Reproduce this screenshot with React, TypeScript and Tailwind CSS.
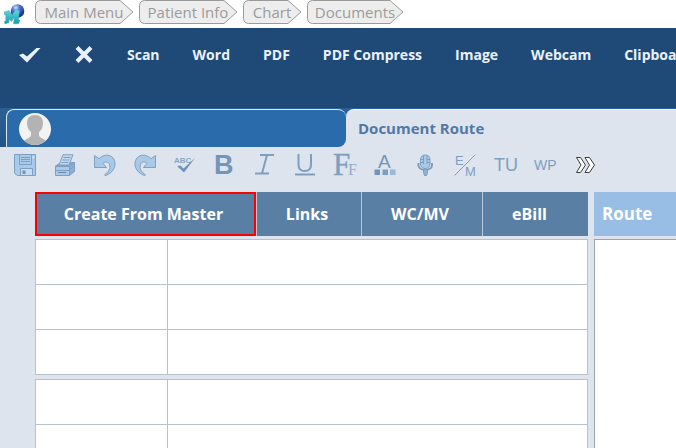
import type { ReactNode } from "react";

const crumbs = [
  { label: "Main Menu", width: 98 },
  { label: "Patient Info", width: 98 },
  { label: "Chart", width: 58 },
  { label: "Documents", width: 96 },
];

const actions = ["Scan", "Word", "PDF", "PDF Compress", "Image", "Webcam", "Clipboard"];

const STEEL = "#7f9fc0";
const SKY = "#a9c9e8";

function Crumb({ label, width }: { label: string; width: number }) {
  const r = width - 1;
  return (
    <a href="#" className="relative flex h-6 shrink-0 items-center justify-center" style={{ width }}>
      <svg className="absolute inset-0 overflow-visible" width={width} height="24" aria-hidden="true">
        <path
          d={`M5.5 .5H${r - 12}L${r + 1} 12L${r - 12} 23.5H5.5Q.5 23 .5 18.500V5.500Q.5 1 5.500 .5Z`}
          fill="#ededed"
          stroke="#9a9a9a"
        />
      </svg>
      <span className="relative text-[15px] leading-5 whitespace-nowrap text-[#9b9b9b]">{label}</span>
    </a>
  );
}

function Tool({ label, children }: { label: string; children: ReactNode }) {
  return (
    <button type="button" aria-label={label} className="size-[22px] shrink-0">
      <svg width="22" height="22" viewBox="0 0 22 22" fill="none" className="overflow-visible">
        {children}
      </svg>
    </button>
  );
}

function Toolbar() {
  const sans = "Liberation Sans, Arial, sans-serif";
  const serif = "Liberation Serif, Times New Roman, serif";
  return (
    <div className="flex gap-[18px] overflow-hidden pt-[7px] pb-4 pl-[14px]">
      <Tool label="Save">
        <path d="M.5 .5H21.500V21.500H3L.5 19Z" fill={SKY} stroke={STEEL} />
        <path d="M5.500 .5V10.500H17.500V.5M7 3.500H16M7 5.500H16M7 7.500H16" stroke={STEEL} />
        <path d="M6.500 21V14.500H18.500V21" fill="#c5dbf0" stroke={STEEL} />
        <path d="M8.500 16.500H11.500V20H8.500Z" fill="#6f92b8" />
        <path d="M18.500 2.500H20V4H18.500Z" fill="#e8f1fa" />
      </Tool>
      <Tool label="Print">
        <path d="M1.500 12L7 8.500H20.500L15.500 12Z" fill="#88a9ca" stroke={STEEL} />
        <path d="M5 11L9 .8H19L15 11Z" fill="#c0d9f0" stroke={STEEL} />
        <path d="M9.500 3.500H16.500M8.500 6H15.500M7.500 8.500H14.500" stroke={STEEL} />
        <path d="M1.500 12.500H15.500V21.500H1.500Z" fill={SKY} stroke={STEEL} />
        <path d="M15.500 12.500L20.500 8.500V17.500L15.500 21.500Z" fill="#8fb0d1" stroke={STEEL} />
        <path d="M2 16.500H15L20 12.500" stroke={STEEL} />
        <path d="M4 18.500H12" stroke="#6888aa" />
      </Tool>
      <Tool label="Undo">
        <path
          d="M.5 1.500L5 4.700C9 .5 15.500 -.2 19 4C23.500 9.500 20.500 18.500 11.500 21.500C10.500 21.700 10.500 20.500 11.500 20C16 17 17 12.500 15 9.500C13.500 7.400 11 7.500 9 9.300L12.500 13.500H.5Z"
          fill={SKY}
          stroke={STEEL}
        />
      </Tool>
      <Tool label="Redo">
        <path
          d="M21.500 1.500L17 4.700C13 .5 6.500 -.2 3 4C-1.500 9.500 1.500 18.500 10.500 21.500C11.500 21.700 11.500 20.500 10.500 20C6 17 5 12.500 7 9.500C8.500 7.400 11 7.500 13 9.300L9.500 13.500H21.500Z"
          fill={SKY}
          stroke={STEEL}
        />
      </Tool>
      <Tool label="Spell check">
        <text x="0" y="9" fontFamily={sans} fontSize="8" fontWeight="700" fill="#8aa6c3">ABC</text>
        <path d="M3 12L6.500 11.500L9.500 14.500L21 4L10 18.500Z" fill="#6f92b5" />
      </Tool>
      <Tool label="Bold">
        <text x="0" y="20" fontFamily={sans} fontSize="27" fontWeight="700" fill="#7395b9">B</text>
      </Tool>
      <Tool label="Italic">
        <path d="M6 1H20M1 19.500H15M13 1L8 19.500" stroke={STEEL} strokeWidth="2" />
      </Tool>
      <Tool label="Underline">
        <path d="M4.500 0V10.500Q4.500 17 10.500 17Q17 17 17 10.500V0" stroke={STEEL} strokeWidth="2" />
        <path d="M1 20.500H21" stroke={STEEL} strokeWidth="2" />
      </Tool>
      <Tool label="Font">
        <text x="-1" y="21" fontFamily={serif} fontSize="31" fill={STEEL} stroke={STEEL} strokeWidth=".4">F</text>
        <text x="14" y="21" fontFamily={serif} fontSize="16" fill="#94afcb">F</text>
      </Tool>
      <Tool label="Font color">
        <text x="4" y="14" fontFamily={sans} fontSize="19" fill="#7395b9">A</text>
        <path d="M.5 15.500H6V21H.5Z" fill="#7395b9" />
        <path d="M8.500 15.500H14V21H8.500Z" fill="#7f9fc0" />
        <path d="M16 15.500H21.500V21H16Z" fill="#9bb8d6" />
      </Tool>
      <Tool label="Dictate">
        <path d="M4.500 9V11.500Q5 15.500 11 16Q17.500 15.500 18 11.500V9" stroke={STEEL} strokeWidth="2" />
        <rect x="6.500" y="1" width="9.500" height="13.500" rx="4.500" fill={SKY} stroke={STEEL} />
        <path d="M9.500 1.500V10M13 1.500V10M6.500 5.500H9M13.500 5.500H16M6.500 8.500H9M13.500 8.500H16" stroke={STEEL} />
        <path d="M9.500 15.500H13.500V18.500L12.500 21.500H10.500L9.500 18.500Z" fill="#8fb0d1" stroke={STEEL} />
      </Tool>
      <Tool label="E/M coding">
        <text x="1" y="11" fontFamily={sans} fontSize="13" fill={STEEL}>E</text>
        <text x="11" y="22" fontFamily={sans} fontSize="13" fill={STEEL}>M</text>
        <path d="M.5 21.500L21.500 .5" stroke={STEEL} />
      </Tool>
      <Tool label="TU">
        <text x="0" y="17" fontFamily={sans} fontSize="18" fill={STEEL}>TU</text>
      </Tool>
      <Tool label="WP">
        <text x="0" y="16" fontFamily={sans} fontSize="14" fill={STEEL}>WP</text>
      </Tool>
      <Tool label="More tools">
        <path
          d="M2.500 3.500H6.500L11.500 11L6.500 18.500H2.500L7 11ZM11 3.500H15.500L20.500 11L15.500 18.500H11L15.500 11Z"
          fill="#fff"
          stroke="#3c3c3c"
        />
      </Tool>
    </div>
  );
}

function DocumentGrid() {
  return (
    <table className="w-full table-fixed border-collapse bg-white">
      <tbody>
        {[0, 1, 2].map((row) => (
          <tr key={row} className="h-[45px]">
            <td className="w-[132px] border border-[#b9c1c9]" />
            <td className="border border-[#b9c1c9]" />
          </tr>
        ))}
      </tbody>
    </table>
  );
}

export default function App() {
  return (
    <div className="flex h-screen flex-col overflow-hidden bg-[#dde4ee] font-['Open_Sans','Noto_Sans',sans-serif]">
      <nav aria-label="Breadcrumb" className="flex h-7 shrink-0 gap-[6px] bg-white pl-1">
        <svg className="mt-1 -mr-px shrink-0" width="26" height="21" viewBox="0 0 26 21" role="img" aria-label="Home">
          <defs>
            <radialGradient id="globe" cx=".38" cy=".25" r=".75">
              <stop offset="0" stopColor="#d5e2ff" />
              <stop offset=".35" stopColor="#5179d4" />
              <stop offset="1" stopColor="#0c248c" />
            </radialGradient>
            <linearGradient id="letter" x1="0" y1="0" x2="0" y2="1">
              <stop offset="0" stopColor="#67d8df" />
              <stop offset="1" stopColor="#159aa9" />
            </linearGradient>
          </defs>
          <circle cx="13.500" cy="7" r="6.800" fill="url(#globe)" />
          <path
            d="M0 8L5 6.500L8 11L11.500 5.500L15.500 6.500L14.500 16H16L14.500 19.800H9.500L10.300 13.500L7.500 17.500L5 15V18.500L1 20L.3 17.500L1.800 17V11L.3 10.500Z"
            fill="url(#letter)"
            stroke="#2aa3b2"
            strokeWidth=".4"
          />
        </svg>
        {crumbs.map((crumb) => (
          <Crumb key={crumb.label} {...crumb} />
        ))}
      </nav>

      <header className="flex h-20 shrink-0 items-start overflow-hidden bg-[#1f4a77] pt-4 pl-[19px] text-[#e9f1fa]">
        <button type="button" aria-label="Accept" className="mr-8 flex h-5 w-[22px] shrink-0 items-center">
          <svg width="22" height="20" viewBox="0 0 22 20" aria-hidden="true">
            <path d="M0 11L4 9.500L8 12.500L17.500 4H21.500L8 18.500Z" fill="currentColor" />
          </svg>
        </button>
        <button type="button" aria-label="Cancel" className="mr-8 flex h-5 w-[22px] shrink-0 items-center justify-center">
          <svg width="18" height="20" viewBox="0 0 18 20" aria-hidden="true">
            <path d="M2 3.500L16 17.500M16 3.500L2 17.500" stroke="currentColor" strokeWidth="4" />
          </svg>
        </button>
        <div className="flex gap-[33px]">
          {actions.map((action) => (
            <button
              key={action}
              type="button"
              className="shrink-0 text-[14px] leading-[22px] font-bold whitespace-nowrap"
            >
              {action}
            </button>
          ))}
        </div>
      </header>

      <div className="flex h-[39px] shrink-0 bg-linear-to-b from-[#2b6096] to-[#235489] pl-[6px]">
        <div className="flex w-[340px] shrink-0 bg-linear-to-b from-transparent from-50% to-[#dde4ee] to-50% pt-px">
          <button
            type="button"
            aria-label="Patient"
            className="flex flex-1 items-center rounded-t-lg rounded-br-lg border-t border-l border-[#dce9f6] bg-[#2a6bab] pl-3"
          >
            <svg width="32" height="32" viewBox="0 0 32 32" aria-hidden="true">
              <clipPath id="avatar">
                <circle cx="16" cy="16" r="16" />
              </clipPath>
              <circle cx="16" cy="16" r="16" fill="#f3f3f3" />
              <path
                clipPath="url(#avatar)"
                d="M3 32C4 25 12 26 12 22V19Q8.500 16.500 8 11Q7.500 2 16 2Q24.500 2 24 11Q23.500 16.500 20 19V22C20 26 28 25 29 32Z"
                fill="#b3b3b3"
              />
            </svg>
          </button>
        </div>
        <div className="flex flex-1 pt-px">
          <button
            type="button"
            className="flex-1 rounded-tl-lg border-t border-white bg-[#dde4ee] pb-0.5 pl-3 text-left text-[15px] leading-5 font-bold text-[#5279a5]"
          >
            Document Route
          </button>
        </div>
      </div>

      <Toolbar />

      <main className="grid min-h-0 flex-1 grid-cols-[minmax(0,553fr)_minmax(0,82fr)] gap-[6px] pl-[35px]">
        <section className="flex flex-col">
          <div className="mb-[3px] grid h-11 shrink-0 grid-cols-[221fr_105fr_121fr_106fr] bg-[#5a7fa5] text-[16px] leading-6 font-bold text-white">
            <button type="button" className="border-2 border-[#ff0000] pr-1">
              Create From Master
            </button>
            <button type="button" className="border-l border-[#b9c7d6] pr-1">
              Links
            </button>
            <button type="button" className="border-l border-[#b9c7d6] pr-1">
              WC/MV
            </button>
            <button type="button" className="border-l border-[#b9c7d6] pr-3">
              eBill
            </button>
          </div>
          <div className="flex flex-col gap-1">
            <DocumentGrid />
            <DocumentGrid />
          </div>
        </section>
        <section className="flex flex-col">
          <h2 className="mb-[3px] flex h-11 shrink-0 items-center bg-[#99bee5] pl-2 text-[17px] leading-6 font-bold text-white">
            Route
          </h2>
          <div className="flex-1 border-t border-l border-[#9ba5af] bg-white" />
        </section>
      </main>
    </div>
  );
}
